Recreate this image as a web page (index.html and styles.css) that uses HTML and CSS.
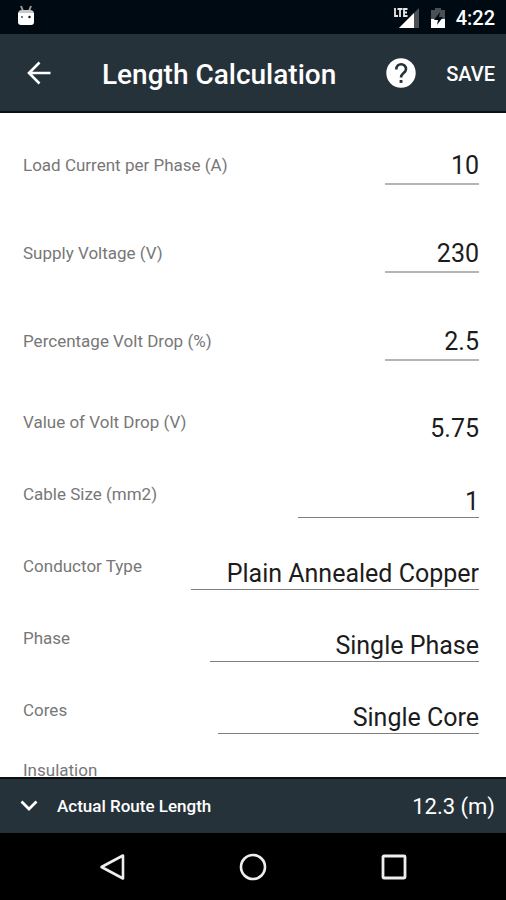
FILE: index.html
```html
<!DOCTYPE html>
<html lang="en">
<head>
<meta charset="utf-8">
<meta name="viewport" content="width=device-width, initial-scale=1">
<title>Length Calculation</title>
<link rel="stylesheet" href="styles.css">
</head>
<body>
<div class="status">
  <svg class="status-app" width="18" height="22" viewBox="0 0 18 22" aria-hidden="true">
    <path d="M4 1l2 5M14 1l-2 5" stroke="#9a9a9a" stroke-width="2"/>
    <path d="M1 9q0-4 4-4h8q4 0 4 4z" fill="#c9c9c9"/>
    <path d="M1 8h16v9q0 3-3 3H4q-3 0-3-3z" fill="#fff"/>
    <circle cx="5" cy="12" r="1" fill="#555"/><circle cx="12.500" cy="12" r="1.200" fill="#111"/>
  </svg>
  <div class="status-right">
    <svg width="26" height="22" viewBox="0 0 26 22" aria-hidden="true">
      <path d="M25 1v20H5z" fill="#4b5054"/>
      <path d="M20 6v15H5z" fill="#fff"/>
      <path d="M1 1v8h3M4 2h4M6 2v8M13 2H9.500v7H13M9.500 5.500H13" fill="none" stroke="#000a12" stroke-width="4"/>
      <path d="M1 1v8h3M3.500 2h5M6 2v8M13.500 2H10v7h3.500M10 5.500h3" fill="none" stroke="#e8e8e8" stroke-width="1.800"/>
    </svg>
    <svg width="16" height="22" viewBox="0 0 16 22" aria-hidden="true">
      <path d="M5 1h6v2h4v9H1V3h4z" fill="#4b5054"/>
      <path d="M1 12h14v9H1z" fill="#fff"/>
      <path d="M10 5L4 13h4l-1 5 6-8H9z" fill="#000a12"/>
    </svg>
    <span>4:22</span>
  </div>
</div>
<header class="bar">
  <button class="icon-button" aria-label="Back">
    <svg width="24" height="24" viewBox="0 0 24 24"><path d="M23.500 12H2M12.500 1.500L2 12l10.500 10.500" fill="none" stroke="#fff" stroke-width="2.600"/></svg>
  </button>
  <h1>Length Calculation</h1>
  <button class="icon-button" aria-label="Help">
    <svg width="30" height="30" viewBox="0 0 30 30"><circle cx="15" cy="15" r="14.700" fill="#fff"/><path d="M10.300 11.500C10.300 4.500 20 4.500 20 11.300c0 3.700-5 4-5 8.200" fill="none" stroke="#26323a" stroke-width="2.600"/><path d="M13.600 22h2.900v2.900h-2.900z" fill="#26323a"/></svg>
  </button>
  <button class="save">SAVE</button>
</header>
<main class="form">
  <div class="row tall"><label for="load">Load Current per Phase (A)</label><input id="load" class="value short" inputmode="decimal" value="10"></div>
  <div class="row tall"><label for="supply">Supply Voltage (V)</label><input id="supply" class="value short" inputmode="decimal" value="230"></div>
  <div class="row tall"><label for="percent">Percentage Volt Drop (%)</label><input id="percent" class="value short" inputmode="decimal" value="2.5"></div>
  <div class="group">
    <div class="row"><label for="drop">Value of Volt Drop (V)</label><output id="drop" class="value">5.75</output></div>
    <div class="row"><label for="size">Cable Size (mm2)</label><select id="size" class="value size"><option>1</option></select></div>
    <div class="row"><label for="conductor">Conductor Type</label><select id="conductor" class="value conductor"><option>Plain Annealed Copper</option></select></div>
    <div class="row"><label for="phase">Phase</label><select id="phase" class="value phase"><option>Single Phase</option></select></div>
    <div class="row last"><label for="cores">Cores</label><select id="cores" class="value cores"><option>Single Core</option></select></div>
    <div class="row"><span class="caption">Insulation</span></div>
  </div>
</main>
<footer class="result">
  <button class="icon-button" aria-label="Collapse">
    <svg width="18" height="12" viewBox="0 0 18 12"><path d="M1.500 1.500L9 9l7.500-7.500" fill="none" stroke="#fff" stroke-width="2.800"/></svg>
  </button>
  <span class="result-label">Actual Route Length</span>
  <span class="result-value">12.3 (m)</span>
</footer>
<nav class="nav">
  <button class="icon-button" aria-label="Back">
    <svg width="28" height="28" viewBox="0 0 28 28"><path d="M25 2.500v23L3.500 14z" fill="none" stroke="#eee" stroke-width="2.600" stroke-linejoin="round"/></svg>
  </button>
  <button class="icon-button" aria-label="Home">
    <svg width="28" height="28" viewBox="0 0 28 28"><circle cx="14" cy="14" r="12" fill="none" stroke="#eee" stroke-width="2.600"/></svg>
  </button>
  <button class="icon-button" aria-label="Recent apps">
    <svg width="28" height="28" viewBox="0 0 28 28"><rect x="3" y="3" width="22" height="22" rx="1" fill="none" stroke="#eee" stroke-width="2.800"/></svg>
  </button>
</nav>
</body>
</html>
```
FILE: styles.css
```css
* { box-sizing: border-box; }

body {
  margin: 0;
  height: 100vh;
  display: flex;
  flex-direction: column;
  background: #fff;
  color: #1c1c1c;
  font-family: Roboto, sans-serif;
}

button {
  padding: 0;
  border: 0;
  background: none;
  color: inherit;
  font: inherit;
}

svg { display: block; }

.status {
  flex: none;
  height: 34px;
  padding: 2px 11px 0 17px;
  display: flex;
  align-items: center;
  justify-content: space-between;
  background: #000a12;
  color: #fff;
}

.status-app { margin-bottom: 4px; }

.status-right {
  display: flex;
  align-items: center;
  gap: 10px;
  font-size: 20px;
  font-weight: 500;
  line-height: 24px;
}

.bar {
  flex: none;
  height: 79px;
  padding: 0 11px 0 27px;
  display: flex;
  align-items: center;
  border-bottom: 2px solid #0b0f12;
  background: #26323a;
  color: #fff;
}

h1 {
  flex: 1;
  margin: 4px 0 0 51px;
  font-size: 28px;
  font-weight: 500;
  line-height: 32px;
  white-space: nowrap;
}

.save {
  margin: 2px 0 0 30px;
  font-size: 20px;
  font-weight: 500;
}

.form {
  flex: 1;
  min-height: 0;
  padding: 8px 27px 0 23px;
  overflow-y: auto;
  scrollbar-width: none;
}

.row {
  height: 72px;
  display: flex;
  justify-content: space-between;
  align-items: flex-start;
}

.tall {
  height: 88px;
  align-items: center;
}

.group { padding-top: 25px; }

.last { height: 60px; }

label, .caption {
  color: #777;
  font-size: 17px;
  line-height: 24px;
}

.value {
  height: 36px;
  margin: 0;
  padding: 4px 0 0;
  border: 0;
  border-bottom: 1px solid #808080;
  border-radius: 0;
  background: none;
  color: #1c1c1c;
  font: 25px/30px Roboto, sans-serif;
  text-align: right;
  text-align-last: right;
  appearance: none;
  outline: 0;
}

.short {
  width: 94px;
  height: 40px;
  padding: 2px 0 0;
  border-bottom: 2px solid #b4b4b4;
}

output.value { border-color: transparent; }

.size { width: 181px; }
.conductor { width: 288px; }
.phase { width: 269px; }
.cores { width: 261px; }

.result {
  flex: none;
  height: 56px;
  padding: 0 11px 0 20px;
  display: flex;
  align-items: center;
  border-top: 2px solid #0b0f12;
  background: #26323a;
  color: #fff;
}

.result-label {
  flex: 1;
  margin-left: 19px;
  font-size: 17px;
  font-weight: 500;
}

.result-value { font-size: 22px; }

.nav {
  flex: none;
  height: 67px;
  padding: 0 98px;
  display: flex;
  align-items: center;
  justify-content: space-between;
  background: #000;
}
```
